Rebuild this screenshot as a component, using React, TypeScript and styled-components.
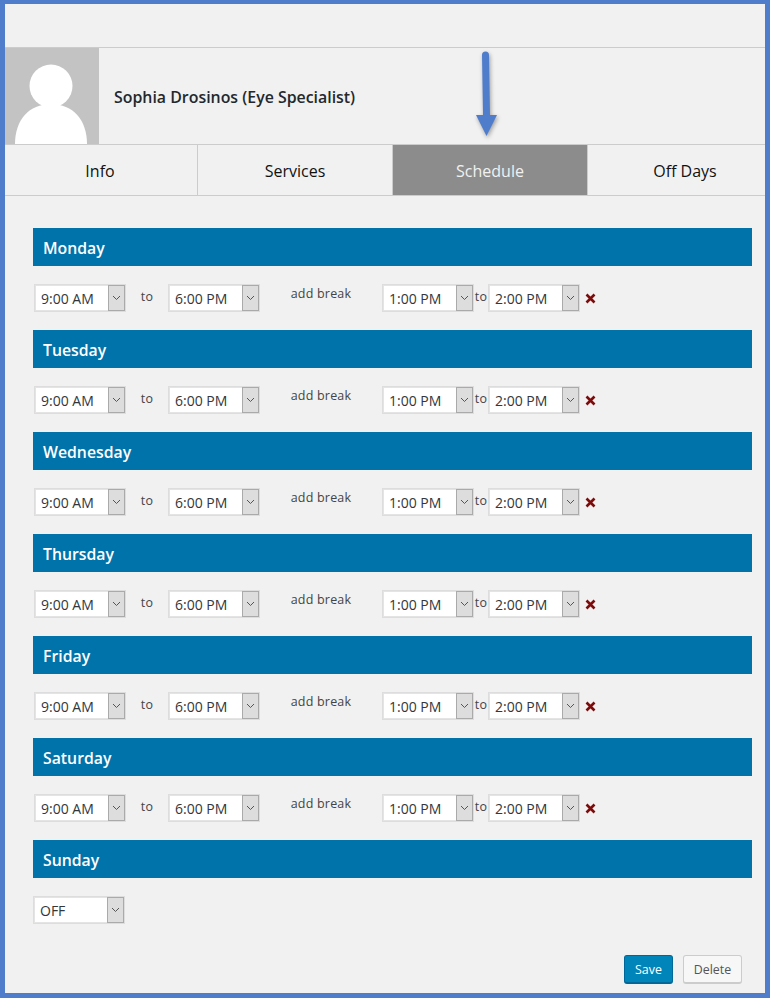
import { createGlobalStyle, styled } from "styled-components";

const GlobalStyle = createGlobalStyle`
  html, body {
    margin: 0;
    padding: 0;
    background: #f1f1f1;
  }
  * {
    box-sizing: border-box;
  }
`;

const Frame = styled.div`
  position: relative;
  width: 770px;
  height: 998px;
  overflow: hidden;
  background: #f1f1f1;
  border-style: solid;
  border-color: #4f7dcc;
  border-width: 4px 5px 5px 5px;
  font-family: "Open Sans", "Noto Sans", sans-serif;
  color: #32373c;
`;

const Profile = styled.div`
  display: flex;
  align-items: center;
  height: 98px;
  margin-top: 43px;
  border-top: 1px solid #ccc;
  border-bottom: 1px solid #ccc;
`;

const Avatar = styled.svg`
  display: block;
  width: 94px;
  height: 96px;
  background: #c3c3c3;
`;

const Name = styled.div`
  margin-left: 15px;
  padding-top: 2px;
  font-size: 15.9px;
  font-weight: 600;
  color: #23282d;
`;

const Tabs = styled.div`
  display: grid;
  grid-template-columns: repeat(4, 195px);
  height: 51px;
  margin-left: -2px;
  border-bottom: 1px solid #ccc;
`;

const Tab = styled.div<{ $active?: boolean }>`
  display: flex;
  align-items: center;
  justify-content: center;
  padding-top: 2px;
  font-size: 16px;
  color: ${({ $active }) => ($active ? "#f1f1f1" : "#111")};
  background: ${({ $active }) => ($active ? "#8c8c8c" : "transparent")};
  border-right: 1px solid #ccc;
`;

const Content = styled.div`
  padding: 32px 13px 0 28px;
`;

const DayHeader = styled.div`
  display: flex;
  align-items: center;
  height: 38px;
  padding: 2px 0 0 10px;
  background: #0073aa;
  color: #fff;
  font-size: 15.8px;
  font-weight: 600;
`;

const Row = styled.div<{ $off?: boolean }>`
  display: flex;
  align-items: flex-start;
  height: 64px;
  padding: 18px 0 0 ${({ $off }) => ($off ? "0" : "1px")};
`;

const SelectBox = styled.div`
  display: flex;
  flex: none;
  width: 92px;
  height: 28px;
  background: #fff;
  border: 1px solid #ddd;
  box-shadow: inset 0 0 0 1px #e4e4e4;
`;

const SelectValue = styled.span`
  flex: 1;
  padding: 3px 0 0 6px;
  font-size: 14px;
  line-height: 22px;
  color: #32373c;
`;

const SelectArrow = styled.span`
  display: flex;
  align-items: center;
  justify-content: center;
  width: 17px;
  height: 26px;
  background: #ddd;
  border: 1px solid #aaa;

  svg {
    display: block;
  }
`;

const Label = styled.span<{ $width: number; $top: number }>`
  flex: none;
  width: ${({ $width }) => $width}px;
  padding-top: ${({ $top }) => $top}px;
  font-size: 12.5px;
  line-height: 18px;
  letter-spacing: 0.2px;
  text-align: center;
  color: #444;
`;

const RemoveIcon = styled.svg`
  flex: none;
  width: 11px;
  height: 11px;
  margin: 9px 0 0 5px;
`;

const Footer = styled.div`
  display: flex;
  justify-content: flex-end;
  gap: 10px;
  padding: 13px 10px 0 0;
`;

const Button = styled.button<{ $primary?: boolean }>`
  height: 29px;
  padding: 0;
  width: ${({ $primary }) => ($primary ? "49px" : "59px")};
  border-radius: 3px;
  border: 1px solid ${({ $primary }) => ($primary ? "#006799" : "#ccc")};
  border-bottom-width: 2px;
  background: ${({ $primary }) => ($primary ? "#0085ba" : "#f7f7f7")};
  color: ${({ $primary }) => ($primary ? "#fff" : "#555")};
  font-family: inherit;
  font-size: 12.4px;
`;

const PointerArrow = styled.svg`
  position: absolute;
  left: 466px;
  top: 44px;
  width: 30px;
  height: 92px;
  filter: drop-shadow(1px 2px 2px rgba(0, 0, 0, 0.35));
`;

const days = ["Monday", "Tuesday", "Wednesday", "Thursday", "Friday", "Saturday"];

function Select({ value }: { value: string }) {
  return (
    <SelectBox>
      <SelectValue>{value}</SelectValue>
      <SelectArrow>
        <svg width="9" height="6" viewBox="0 0 9 6">
          <path d="M1 1l3.5 3.5L8 1" fill="none" stroke="#555" strokeWidth="1" />
        </svg>
      </SelectArrow>
    </SelectBox>
  );
}

export default function App() {
  return (
    <Frame>
      <GlobalStyle />
      <Profile>
        <Avatar viewBox="0 0 94 96">
          <circle cx="46" cy="38" r="21.5" fill="#fff" />
          <path d="M10 96c0-24 14-40 36-40s36 16 36 40z" fill="#fff" />
        </Avatar>
        <Name>Sophia Drosinos (Eye Specialist)</Name>
      </Profile>
      <Tabs>
        <Tab>Info</Tab>
        <Tab>Services</Tab>
        <Tab $active>Schedule</Tab>
        <Tab>Off Days</Tab>
      </Tabs>
      <Content>
        {days.map((day) => (
          <div key={day}>
            <DayHeader>{day}</DayHeader>
            <Row>
              <Select value="9:00 AM" />
              <Label $width={42} $top={4}>to</Label>
              <Select value="6:00 PM" />
              <Label $width={122} $top={1}>add break</Label>
              <Select value="1:00 PM" />
              <Label $width={14} $top={4}>to</Label>
              <Select value="2:00 PM" />
              <RemoveIcon viewBox="0 0 11 11">
                <path d="M1.5 1.5l8 8M9.5 1.5l-8 8" stroke="#7f0a0a" strokeWidth="2.6" />
              </RemoveIcon>
            </Row>
          </div>
        ))}
        <DayHeader>Sunday</DayHeader>
        <Row $off>
          <Select value="OFF" />
        </Row>
        <Footer>
          <Button $primary>Save</Button>
          <Button>Delete</Button>
        </Footer>
      </Content>
      <PointerArrow viewBox="0 0 30 92">
        <path d="M11 7a3.5 3.5 0 0 1 7 0l1 60h7L15.5 88 5 67h7z" fill="#4f7dcc" />
      </PointerArrow>
    </Frame>
  );
}
